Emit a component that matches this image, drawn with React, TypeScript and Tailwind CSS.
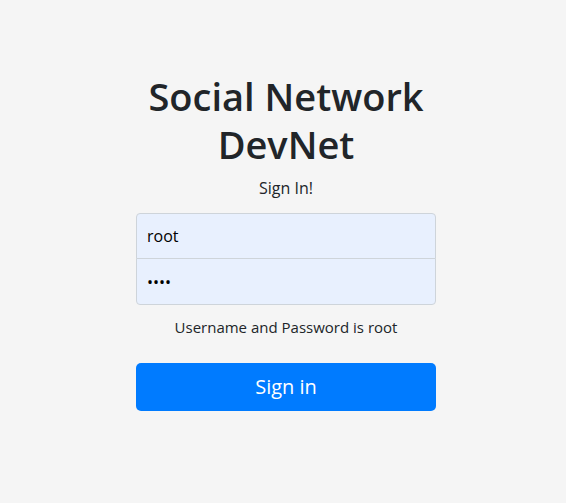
export default function App() {
  const font = { fontFamily: '"Segoe UI", "Open Sans", "Noto Sans", sans-serif' };
  return (
    <div className="min-h-screen bg-[#f5f5f5] pl-[6px] text-[#212529]" style={font}>
      <form className="mx-auto w-[300px] pt-[72px] text-center" onSubmit={(e) => e.preventDefault()}>
        <h1 className="text-[38px] font-semibold leading-[48px]">Social Network DevNet</h1>
        <p className="mt-[8px] text-[16px] leading-[24px]">Sign In!</p>
        <div className="mt-[13px]">
          <input
            defaultValue="root"
            className="block h-[46px] w-full rounded-t-[4px] border border-[#ced4da] bg-[#e8f0fe] px-[10px] text-[16px] text-black outline-none"
          />
          <input
            type="password"
            defaultValue="root"
            className="-mt-px block h-[47px] w-full rounded-b-[4px] border border-[#ced4da] bg-[#e8f0fe] px-[10px] text-[16px] text-black outline-none"
          />
        </div>
        <p className="mt-[10px] text-[15px] leading-[24px]">Username and Password is root</p>
        <button className="mt-[24px] h-[48px] w-full rounded-[5px] bg-[#007bff] text-[20px] text-white">Sign in</button>
      </form>
    </div>
  );
}
